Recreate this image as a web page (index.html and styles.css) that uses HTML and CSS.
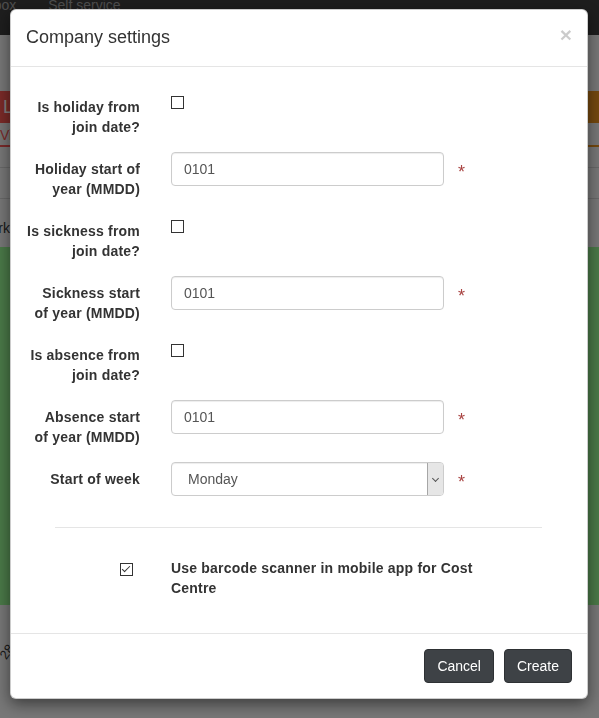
FILE: index.html
```html
<!DOCTYPE html>
<html lang="en">
<head>
    <meta charset="UTF-8">
    <meta name="viewport" content="width=device-width, initial-scale=1.0">
    <title>Company settings</title>
    <link rel="stylesheet" href="styles.css">
</head>
<body>
    <div class="app">
        <nav class="navbar">
            <ul class="nav">
                <li><a href="#">Inbox</a></li>
                <li><a href="#">Self service</a></li>
            </ul>
        </nav>
        <main class="dashboard">
            <div class="cards">
                <div class="card card-red">
                    <div class="card-head">Leave</div>
                    <a class="card-link" href="#">View all</a>
                </div>
                <div class="card card-orange">
                    <div class="card-head">Late</div>
                    <a class="card-link" href="#">View all</a>
                </div>
            </div>
            <div class="week-head"></div>
            <div class="week-row">
                <span class="row-label">Work</span>
            </div>
            <div class="green-panel"></div>
            <div class="axis"><span class="axis-tick">28</span></div>
        </main>
    </div>

    <div class="backdrop"></div>

    <div class="modal">
        <div class="modal-dialog">
            <div class="modal-content">
                <div class="modal-header">
                    <h4 class="modal-title">Company settings</h4>
                    <button class="close" type="button">&times;</button>
                </div>
                <form class="modal-body">
                    <div class="form-row">
                        <label class="form-label">Is holiday from<br>join date?</label>
                        <div class="form-field"><input type="checkbox" class="check"></div>
                    </div>
                    <div class="form-row">
                        <label class="form-label">Holiday start of<br>year (MMDD)</label>
                        <div class="form-field"><input type="text" class="text-input" value="0101"></div>
                        <span class="required">*</span>
                    </div>
                    <div class="form-row">
                        <label class="form-label">Is sickness from<br>join date?</label>
                        <div class="form-field"><input type="checkbox" class="check"></div>
                    </div>
                    <div class="form-row">
                        <label class="form-label">Sickness start<br>of year (MMDD)</label>
                        <div class="form-field"><input type="text" class="text-input" value="0101"></div>
                        <span class="required">*</span>
                    </div>
                    <div class="form-row">
                        <label class="form-label">Is absence from<br>join date?</label>
                        <div class="form-field"><input type="checkbox" class="check"></div>
                    </div>
                    <div class="form-row">
                        <label class="form-label">Absence start<br>of year (MMDD)</label>
                        <div class="form-field"><input type="text" class="text-input" value="0101"></div>
                        <span class="required">*</span>
                    </div>
                    <div class="form-row">
                        <label class="form-label">Start of week</label>
                        <div class="form-field select-wrap">
                            <select class="select-input">
                                <option>Monday</option>
                                <option>Sunday</option>
                            </select>
                        </div>
                        <span class="required">*</span>
                    </div>

                    <hr class="divider">

                    <div class="form-row barcode-row">
                        <div class="barcode-check"><input type="checkbox" class="check" checked></div>
                        <label class="barcode-label">Use barcode scanner in mobile app for Cost Centre</label>
                    </div>
                </form>
                <div class="modal-footer">
                    <button class="btn" type="button">Cancel</button>
                    <button class="btn" type="button">Create</button>
                </div>
            </div>
        </div>
    </div>
</body>
</html>
```

FILE: styles.css
```css
html, body {
    height: 100%;
    overflow: hidden;
}
body {
    margin: 0;
    font-family: "Liberation Sans", Arial, sans-serif;
    font-size: 14px;
    line-height: 20px;
    color: #333;
    background: #eeeeee;
}

/* page behind the dialog */
.navbar {
    height: 35px;
    background: #3c3c3c;
    overflow: hidden;
}
.nav {
    list-style: none;
    display: flex;
    margin: -5px 0 0 -34px;
    padding: 0;
}
.nav a {
    display: block;
    padding: 0 16px;
    color: #9d9d9d;
    text-decoration: none;
}
.cards {
    display: flex;
    gap: 10px;
    padding-top: 56px;
}
.card {
    flex: 1;
}
.card-head {
    height: 32px;
    padding: 6px 3px 0;
    box-sizing: border-box;
    color: #fff;
    font-size: 18px;
}
.card-link {
    display: block;
    margin-top: 2px;
    text-decoration: none;
    border-bottom: 2px solid;
}
.card-red .card-head { background: #f45450; }
.card-red .card-link { color: #f45454; }
.card-orange .card-head { background: #e8901c; }
.card-orange .card-link { color: #e8901c; padding-left: 8px; }
.week-head {
    margin-top: 20px;
    height: 30px;
    border-top: 1px solid #d0d0d0;
    border-bottom: 1px solid #d0d0d0;
}
.week-row {
    display: flex;
    padding-top: 19px;
}
.row-label {
    width: 50px;
    margin-left: -40px;
    text-align: right;
    color: #333;
}
.green-panel {
    margin-top: 9px;
    height: 358px;
    background: #94f290;
}
.axis {
    padding: 36px 0 0 0;
}
.axis-tick {
    display: inline-block;
    transform: rotate(-55deg);
    color: #333;
    font-size: 13px;
}

.backdrop {
    position: fixed;
    inset: 0;
    background: rgba(0, 0, 0, 0.5);
}

/* dialog */
.modal {
    position: fixed;
    inset: 0;
}
.modal-dialog {
    width: 578px;
    margin: 9px 11px 0 10px;
}
.modal-content {
    background: #fff;
    border: 1px solid rgba(0, 0, 0, 0.2);
    border-radius: 6px;
    box-shadow: 0 5px 15px rgba(0, 0, 0, 0.5);
}
.modal-header {
    display: flex;
    justify-content: space-between;
    align-items: flex-start;
    padding: 15px;
    border-bottom: 1px solid #e5e5e5;
}
.modal-title {
    margin: 0;
    font-size: 18px;
    font-weight: normal;
    line-height: 1.42857;
    color: #333;
}
.close {
    margin-top: -1px;
    padding: 0;
    border: 0;
    background: none;
    font-family: "Liberation Sans", Arial, sans-serif;
    font-size: 21px;
    font-weight: bold;
    line-height: 1;
    color: #000;
    opacity: 0.2;
    cursor: pointer;
}
.modal-body {
    display: flex;
    flex-direction: column;
    gap: 15px;
    padding: 23px 15px 35px;
    margin: 0;
}
.form-row {
    display: grid;
    grid-template-columns: 129px 273px 1fr;
    column-gap: 16px;
}
.form-label {
    padding: 7px 15px 0 0;
    text-align: right;
    font-weight: bold;
    letter-spacing: 0.2px;
    white-space: nowrap;
}
.check {
    appearance: none;
    -webkit-appearance: none;
    position: relative;
    width: 13px;
    height: 13px;
    margin: 6px 0 0;
    border: 1px solid #333;
    border-radius: 0;
    background: #fff;
    display: block;
}
.check:checked::after {
    content: "";
    position: absolute;
    left: 3px;
    top: 0;
    width: 3px;
    height: 7px;
    border: solid #333;
    border-width: 0 1px 1px 0;
    transform: rotate(45deg);
}
.text-input,
.select-input {
    display: block;
    width: 100%;
    height: 34px;
    box-sizing: border-box;
    padding: 6px 12px;
    border: 1px solid #ccc;
    border-radius: 4px;
    font-family: "Liberation Sans", Arial, sans-serif;
    font-size: 14px;
    color: #555;
    background: #fff;
    box-shadow: inset 0 1px 1px rgba(0, 0, 0, 0.075);
}
.select-wrap {
    position: relative;
}
.select-input {
    appearance: none;
    -webkit-appearance: none;
    padding-left: 16px;
}
.select-wrap::after {
    content: "";
    position: absolute;
    top: 1px;
    right: 1px;
    bottom: 1px;
    width: 15px;
    background: #e6e6e6;
    border-left: 1px solid #a6a6a6;
    border-radius: 0 3px 3px 0;
}
.select-wrap::before {
    content: "";
    position: absolute;
    z-index: 1;
    top: 14px;
    right: 6px;
    width: 4px;
    height: 4px;
    border: solid #555;
    border-width: 0 1px 1px 0;
    transform: rotate(45deg);
}
.required {
    padding: 10px 0 0 0;
    margin-left: -2px;
    font-size: 18px;
    color: #a94442;
}
.divider {
    margin: 16px 30px 15px 29px;
    border: 0;
    border-top: 1px solid #e5e5e5;
}
.barcode-check {
    display: flex;
    justify-content: flex-end;
    padding-right: 22px;
}
.barcode-check .check {
    margin-top: 5px;
}
.barcode-label {
    grid-column: 2 / 4;
    max-width: 330px;
    font-weight: bold;
    letter-spacing: 0.2px;
}
.modal-footer {
    display: flex;
    justify-content: flex-end;
    gap: 10px;
    padding: 15px;
    border-top: 1px solid #e5e5e5;
}
.btn {
    padding: 6px 12px;
    border: 1px solid #2e3134;
    border-radius: 4px;
    background: #3e4246;
    color: #fff;
    font-family: "Liberation Sans", Arial, sans-serif;
    font-size: 14px;
    line-height: 20px;
    cursor: pointer;
}
```
